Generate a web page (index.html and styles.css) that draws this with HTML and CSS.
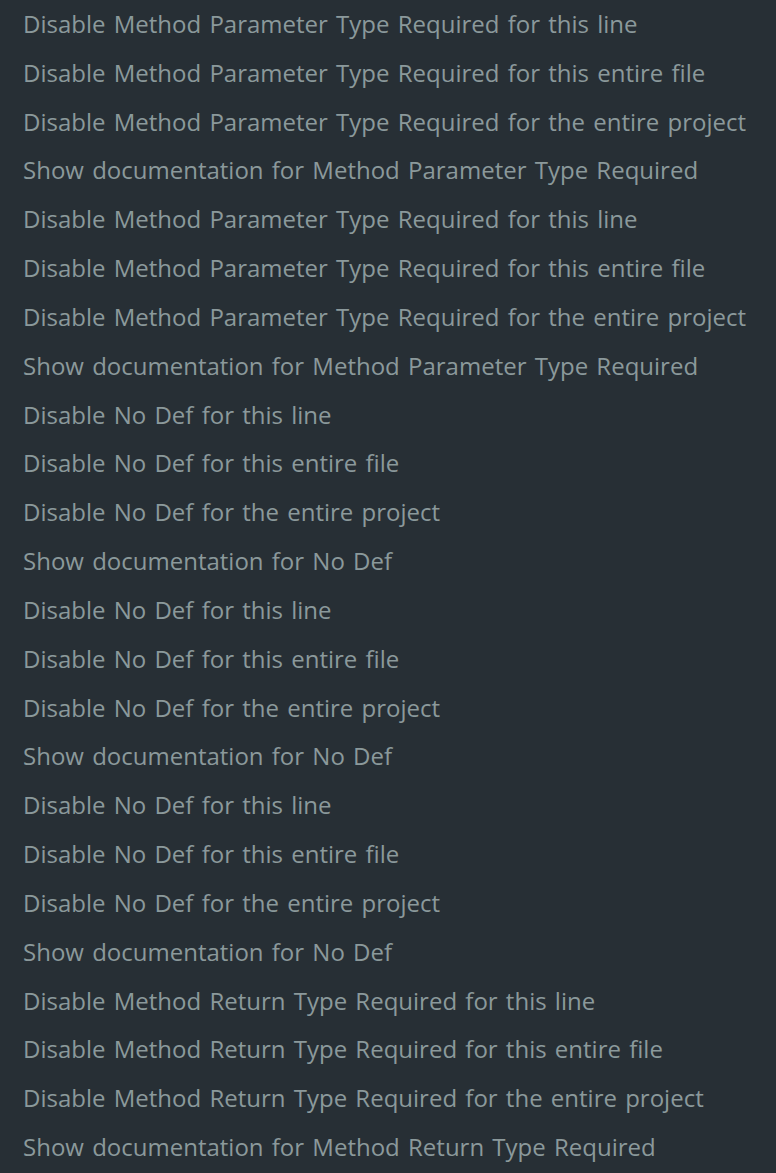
FILE: index.html
```html
<!DOCTYPE html>
<html>
<head>
<meta charset="utf-8">
<link rel="stylesheet" href="styles.css">
</head>
<body>
<ul class="menu">
<li class="item">Disable Method Parameter Type Required for this line</li>
<li class="item">Disable Method Parameter Type Required for this entire file</li>
<li class="item">Disable Method Parameter Type Required for the entire project</li>
<li class="item">Show documentation for Method Parameter Type Required</li>
<li class="item">Disable Method Parameter Type Required for this line</li>
<li class="item">Disable Method Parameter Type Required for this entire file</li>
<li class="item">Disable Method Parameter Type Required for the entire project</li>
<li class="item">Show documentation for Method Parameter Type Required</li>
<li class="item">Disable No Def for this line</li>
<li class="item">Disable No Def for this entire file</li>
<li class="item">Disable No Def for the entire project</li>
<li class="item">Show documentation for No Def</li>
<li class="item">Disable No Def for this line</li>
<li class="item">Disable No Def for this entire file</li>
<li class="item">Disable No Def for the entire project</li>
<li class="item">Show documentation for No Def</li>
<li class="item">Disable No Def for this line</li>
<li class="item">Disable No Def for this entire file</li>
<li class="item">Disable No Def for the entire project</li>
<li class="item">Show documentation for No Def</li>
<li class="item">Disable Method Return Type Required for this line</li>
<li class="item">Disable Method Return Type Required for this entire file</li>
<li class="item">Disable Method Return Type Required for the entire project</li>
<li class="item">Show documentation for Method Return Type Required</li>
</ul>
</body>
</html>
```
FILE: styles.css
```css
html, body {
  margin: 0;
  padding: 0;
  background: #272f35;
}
.menu {
  list-style: none;
  margin: 0;
  padding: 0;
}
.item {
  font-family: "Open Sans", "Noto Sans", sans-serif;
  font-size: 24px;
  line-height: 48.83px;
  word-spacing: 2px;
  color: #8b999b;
  padding-left: 23px;
  white-space: nowrap;
}
```
